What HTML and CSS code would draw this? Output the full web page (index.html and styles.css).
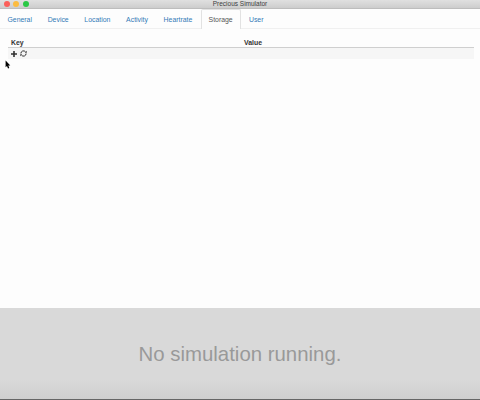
FILE: index.html
```html
<!DOCTYPE html>
<html lang="en">
<head>
<meta charset="utf-8">
<title>Precious Simulator</title>
<link rel="stylesheet" href="styles.css">
</head>
<body>
<div class="window">
  <header class="titlebar">
    <div class="lights"><i class="light close"></i><i class="light minimize"></i><i class="light expand"></i></div>
    <span class="title">Precious Simulator</span>
  </header>
  <nav class="tabs">
    <a class="tab">General</a>
    <a class="tab">Device</a>
    <a class="tab">Location</a>
    <a class="tab">Activity</a>
    <a class="tab">Heartrate</a>
    <a class="tab active">Storage</a>
    <a class="tab">User</a>
  </nav>
  <main class="content">
    <div class="row head"><span>Key</span><span>Value</span></div>
    <div class="row actions">
      <div class="icons">
        <svg width="6" height="6" viewBox="0 0 6 6"><path d="M3 0v6M0 3h6" stroke="#303030" stroke-width="1.6"/></svg>
        <svg width="7" height="7" viewBox="0 0 14 14"><g fill="none" stroke="#333" stroke-width="2"><path d="M1.8 7A5.2 5.2 0 0 1 11 3.6"/><path d="M12.2 7A5.2 5.2 0 0 1 3 10.4"/></g><path d="M13.5 1.5v3.8H9.7zM.5 12.5V8.7h3.8z" fill="#333"/></svg>
      </div>
    </div>
  </main>
  <footer class="status">No simulation running.</footer>
</div>
<svg class="cursor" width="6" height="10" viewBox="0 0 6 10"><path d="M.6 .4v6.9l1.4-1.2 1 2.4 1.3-.6-1-2.3h2z" fill="#000"/></svg>
</body>
</html>
```

FILE: styles.css
```css
* {
  box-sizing: border-box;
}

body {
  margin: 0;
  font-family: "Liberation Sans", Arial, sans-serif;
  font-size: 6.9px;
  color: #333;
}

.window {
  display: flex;
  flex-direction: column;
  height: 400px;
  overflow: hidden;
  background: #fdfdfd;
}

.titlebar {
  display: grid;
  grid-template-columns: 1fr auto 1fr;
  height: 9px;
  background: linear-gradient(#e0e0e0, #cdcdcd);
  border-bottom: 1px solid #bdbdbd;
}

.lights {
  display: flex;
  gap: 3.6px;
  padding: 1px 0 0 3.5px;
}

.light {
  width: 6px;
  height: 6px;
  border-radius: 50%;
}

.close {
  background: #fb5f5a;
}

.minimize {
  background: #fcbc40;
}

.expand {
  background: #2ac845;
}

.title {
  font-size: 6.5px;
  line-height: 8px;
  color: #404040;
}

.tabs {
  display: flex;
  gap: .8px;
  height: 20px;
  border-bottom: 1px solid #f0f0f0;
}

.tab {
  height: 20px;
  padding: 0 7.45px;
  line-height: 21px;
  color: #337ab7;
}

.tab.active {
  padding: 0 7px;
  color: #555;
  background: #fdfdfd;
  border: solid #e2e2e2;
  border-width: 1px 1px 0;
  border-radius: 2px 2px 0 0;
  line-height: 19px;
}

.content {
  flex: 1;
  padding: 9px 6.5px 0 8px;
}

.row {
  display: grid;
  grid-template-columns: 233px 1fr;
  padding-left: 3px;
}

.head {
  height: 10px;
  border-bottom: 1px solid #cfcfcf;
  font-weight: bold;
  line-height: 9px;
}

.actions {
  height: 11px;
  background: #f6f6f6;
}

.icons {
  display: flex;
  align-items: center;
  gap: 2.5px;
}

.status {
  display: flex;
  align-items: center;
  justify-content: center;
  height: 92px;
  padding-top: 2px;
  background: linear-gradient(#d9d9d9 78%, #cfcfcf);
  border-bottom: 1px solid #666;
  font-size: 20.4px;
  color: #999;
}

.cursor {
  position: absolute;
  left: 5px;
  top: 60px;
}
```
